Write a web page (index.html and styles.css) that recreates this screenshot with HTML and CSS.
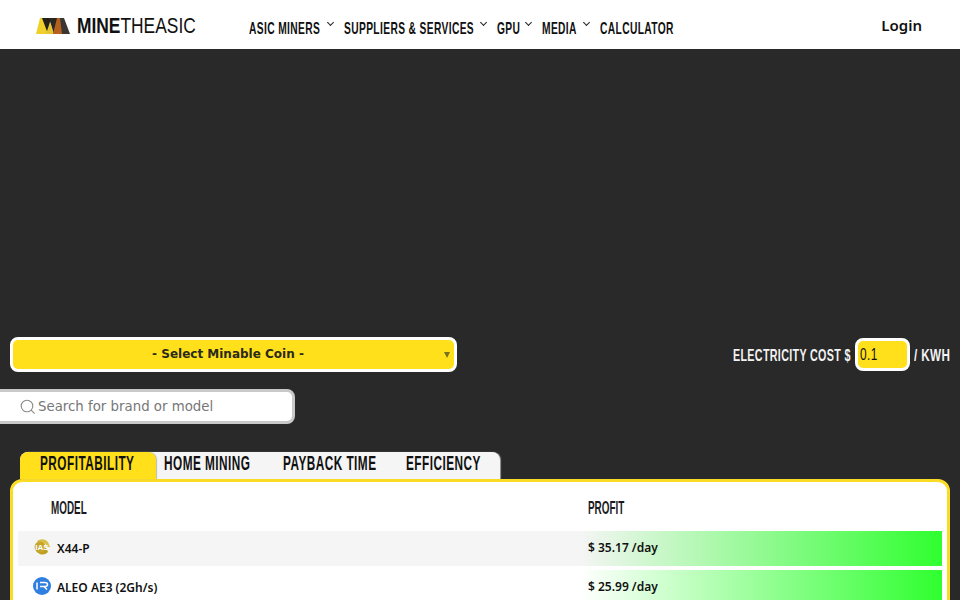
FILE: index.html
```html
<!DOCTYPE html>
<html lang="en">
  <head>
    <meta charset="utf-8">
    <title>MineTheASIC</title>
    <link rel="stylesheet" href="styles.css">
  </head>
  <body>
    <!-- Top bar -->
    <header class="topbar">
      <a class="logo">
        <svg class="logo-mark" width="34" height="16" viewBox="0 0 34 16">
          <path d="M0 16 L4 0 H8 L12 16 Z" fill="#efcf2a"/>
          <path d="M6 0 H15 L12 16 Z" fill="#231f1a"/>
          <path d="M10 16 L14 4 L18 16 Z" fill="#e6c431"/>
          <path d="M13 0 H22 L18 16 Z" fill="#2b2620"/>
          <path d="M17 16 L21 0 H25 L27 16 Z" fill="#b5601f"/>
          <path d="M24 0 H28 L34 16 H26 Z" fill="#3a3632"/>
        </svg>
        <span class="logo-text"><b>MINE</b>THEASIC</span>
      </a>
      <nav class="nav">
        <a class="nav-item has-sub"><span class="nav-label">ASIC Miners</span></a>
        <a class="nav-item has-sub"><span class="nav-label">Suppliers &amp; Services</span></a>
        <a class="nav-item has-sub"><span class="nav-label">GPU</span></a>
        <a class="nav-item has-sub"><span class="nav-label">Media</span></a>
        <a class="nav-item"><span class="nav-label">Calculator</span></a>
      </nav>
      <a class="login">Login</a>
    </header>

    <main class="content">
      <!-- Filters -->
      <div class="filter-row">
        <div class="coin-select">
          <span>- Select Minable Coin -</span>
          <i class="caret"></i>
        </div>
        <div class="electricity">
          <div class="cost-label"><span>Electricity cost $</span></div>
          <div class="cost-input"><span>0.1</span></div>
          <div class="cost-unit"><span>/ KWH</span></div>
        </div>
      </div>

      <div class="search">
        <svg width="16" height="16" viewBox="0 0 16 16" fill="none" stroke="#8a8a8a" stroke-width="1.1">
          <circle cx="7" cy="7" r="5.8"/>
          <path d="M11.2 11.2 L14.6 14.6"/>
        </svg>
        <span>Search for brand or model</span>
      </div>

      <!-- Tabs -->
      <div class="tabs">
        <a class="tab active"><span>Profitability</span></a>
        <a class="tab"><span>Home Mining</span></a>
        <a class="tab"><span>Payback Time</span></a>
        <a class="tab"><span>Efficiency</span></a>
      </div>

      <!-- Miner table -->
      <section class="card">
        <div class="table-head">
          <span class="col-model"><span>Model</span></span>
          <span class="col-profit"><span>Profit</span></span>
        </div>
        <div class="row shaded">
          <div class="model">
            <svg class="coin" width="18" height="18" viewBox="0 0 18 18">
              <path d="M4 3 A8 8 0 0 1 15 4 L17 9 L14 9 A5 5 0 0 0 6 6 Z" fill="#d9c04a"/>
              <path d="M2 9 A7.5 7.5 0 0 0 15 14 L13 9 Z" fill="#bd9f22"/>
              <circle cx="7" cy="9" r="5.5" fill="#c6a72a"/>
              <text x="9" y="12" font-size="8" font-weight="700" text-anchor="middle" fill="#fff" font-family="Liberation Sans">IAS</text>
            </svg>
            <span>X44-P</span>
          </div>
          <div class="profit" style="--bar: 100%">$ 35.17 /day</div>
        </div>
        <div class="row">
          <div class="model">
            <svg class="coin" width="18" height="18" viewBox="0 0 18 18">
              <circle cx="9" cy="9" r="9" fill="#2e7fe0"/>
              <path d="M4 5.5 V12.5 M7 5.5 H12 Q14.5 5.5 14.5 7.5 Q14.5 9.5 12 9.5 H7 M11 9.5 L14 12.5" fill="none" stroke="#fff" stroke-width="1.5"/>
            </svg>
            <span>ALEO AE3 (2Gh/s)</span>
          </div>
          <div class="profit" style="--bar: 100%">$ 25.99 /day</div>
        </div>
      </section>
    </main>
  </body>
</html>
```

FILE: styles.css
```css
/* General */
html, body {
  height: 100%;
  overflow: hidden;
}

body {
  margin: 0;
  background-color: #292929;
  font-family: 'Noto Sans', sans-serif;
  color: #111;
}

/* No condensed face is installed, so headings get squeezed sideways.
   The boxes around them carry the real widths. */
.logo-text, .nav-label, .electricity span, .tab span, .table-head span {
  font-family: 'Liberation Sans', sans-serif;
  font-weight: 700;
  text-transform: uppercase;
  white-space: nowrap;
  display: inline-block;
  transform-origin: left center;
}

/* Top bar */
.topbar {
  height: 49px;
  background: #fff;
  display: flex;
  align-items: center;
  padding: 0 39px 0 36px;
}

.logo {
  width: 213px;
  flex: none;
  display: flex;
  align-items: center;
  gap: 7px;
  padding-top: 2px;
}

.logo-text {
  font-size: 22px;
  font-weight: 400;
  color: #111;
  transform: scaleX(0.79);
}

.logo-text b {
  font-weight: 700;
}

.nav {
  display: grid;
  grid-template-columns: 86px 144px 36px 49px 71px;
  gap: 9px;
  padding-top: 8px;
}

.nav-item {
  display: flex;
  height: 18px;
  align-items: center;
}

.nav-label {
  width: 0;
  font-size: 16.5px;
  letter-spacing: 0.6px;
  color: #111;
  transform: scaleX(0.62);
}

.nav-item.has-sub::after {
  content: "";
  width: 4px;
  height: 4px;
  margin: -13px 2px 0 auto;
  border-right: 1.3px solid #222;
  border-bottom: 1.3px solid #222;
  transform: rotate(45deg);
}

.login {
  margin: 1px -1px 0 auto;
  font-size: 15px;
  font-weight: 600;
  color: #111;
}

/* Filters */
.content {
  padding: 288px 10px 0;
}

.filter-row {
  display: flex;
  justify-content: space-between;
  align-items: center;
}

.coin-select {
  width: 447px;
  height: 35px;
  box-sizing: border-box;
  background: #ffe01b;
  border: 3px solid #fff;
  border-radius: 8px;
  display: flex;
  align-items: center;
  justify-content: center;
  position: relative;
  padding: 0 11px 2px 0;
  font-family: 'DejaVu Sans', sans-serif;
  font-size: 12px;
  font-weight: 700;
  color: #2a2a1a;
}

.caret {
  position: absolute;
  right: 4px;
  top: 12px;
  border-left: 3.5px solid transparent;
  border-right: 3.5px solid transparent;
  border-top: 6px solid #77701c;
}

.electricity {
  display: flex;
  align-items: center;
  color: #f2f2f2;
}

.electricity span {
  font-size: 16.5px;
  letter-spacing: 0.5px;
}

.cost-label {
  width: 122px;
}

.cost-label span {
  transform: scaleX(0.65);
}

.cost-input {
  width: 55px;
  height: 33px;
  box-sizing: border-box;
  background: #ffe01b;
  border: 3px solid #fff;
  border-radius: 8px;
  padding-left: 2px;
  display: flex;
  align-items: center;
}

.cost-input span {
  font-weight: 400;
  color: #111;
  transform: scaleX(0.72);
}

.cost-unit {
  width: 36px;
  margin-left: 4px;
}

.cost-unit span {
  transform: scaleX(0.71);
}

.search {
  width: 305px;
  height: 35px;
  box-sizing: border-box;
  margin: 17px 0 0 -20px;
  padding: 0 0 0 27px;
  background: #fff;
  border: 3px solid #c9c9c9;
  border-radius: 8px;
  display: flex;
  align-items: center;
  gap: 2px;
  font-family: 'DejaVu Sans', sans-serif;
  font-size: 13.33px;
  color: #777;
}

/* Tabs */
.tabs {
  width: 480px;
  height: 27px;
  margin: 28px 0 0 10px;
  display: grid;
  grid-template-columns: 136px 119px 123px 102px;
  background: #f5f5f5;
  border-radius: 8px 8px 0 0;
  box-shadow: 1px 0 1px #999;
}

.tab {
  padding-left: 8px;
  font-size: 20px;
  line-height: 22px;
  color: #111;
}

.tab span {
  letter-spacing: 0.8px;
  transform: scaleX(0.59);
}

.tab.active {
  padding-left: 20px;
  background: #ffe01b;
  border-radius: 8px 8px 0 0;
  box-shadow: 1px 0 1px #bbb;
}

/* Miner table */
.card {
  background: #fff;
  border: 3px solid #fbdc24;
  border-radius: 12px;
  padding: 0 5px;
  height: 160px;
}

.table-head {
  height: 50px;
  padding-top: 3px;
  box-sizing: border-box;
  display: grid;
  grid-template-columns: 570px 1fr;
  align-items: center;
  color: #1a1a22;
}

.table-head span span {
  font-size: 18px;
  transform: scaleX(0.55);
}

.col-model {
  padding-left: 33px;
}

.row {
  display: grid;
  grid-template-columns: 562px 1fr;
  height: 35px;
  margin-bottom: 4px;
  font-size: 12px;
  font-weight: 600;
  color: #111;
}

.table-head + .row {
  margin-top: -1px;
}

.row.shaded {
  background: #f5f5f5;
}

.model {
  display: flex;
  align-items: center;
  gap: 6px;
  padding-left: 15px;
}

.coin {
  margin-top: -4px;
}

.profit {
  display: flex;
  align-items: center;
  padding: 0 0 2px 8px;
  background: linear-gradient(to right, transparent, #2fff2f var(--bar));
}
```
